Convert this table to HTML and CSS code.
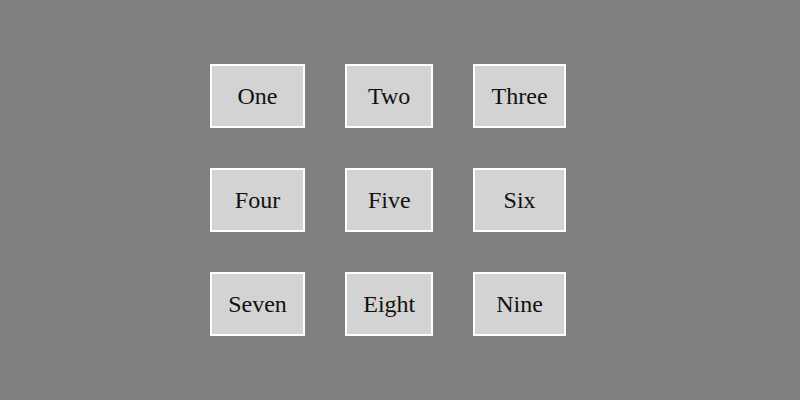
FILE: index.html
```html
<!DOCTYPE html>
<html lang="en">

<head>
    <meta charset="UTF-8">
    <meta name="viewport" content="width=device-width, initial-scale=1.0">
    <title>Grid</title>
    <link rel="stylesheet" href="styles.css">
</head>

<body>

    <div class="grid-container">
        <div class="grid-item">One</div>
        <div class="grid-item">Two</div>
        <div class="grid-item">Three</div>
        <div class="grid-item">Four</div>
        <div class="grid-item">Five</div>
        <div class="grid-item">Six</div>
        <div class="grid-item">Seven</div>
        <div class="grid-item">Eight</div>
        <div class="grid-item">Nine</div>
    </div>

</body>

</html>
```

FILE: styles.css
```css
body {
    font-family: 'Liberation Serif', 'Times New Roman', serif;
    background-color: #808080;
    margin: 0;
    height: 100vh;
}

.grid-container {
    display: grid;
    grid-template-columns: auto auto auto;
    gap: 40px;
    width: fit-content;
    padding: 64px 0 0 210px;
}

.grid-item {
    background-color: #d3d3d3;
    border: 2px solid #fff;
    padding: 16px 16.2px;
    font-size: 24px;
    line-height: 28px;
    text-align: center;
    color: #111;
}
```
